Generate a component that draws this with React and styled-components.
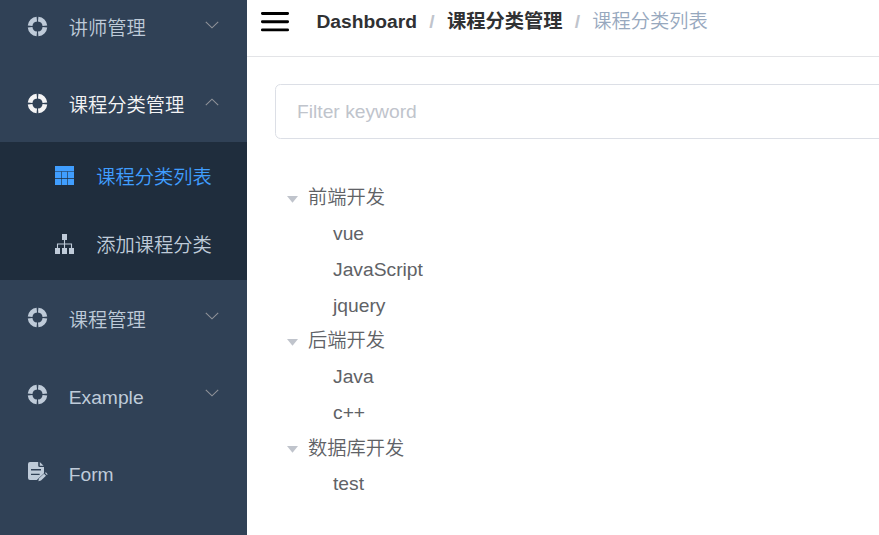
import React from "react";
import styled, { createGlobalStyle } from "styled-components";

const GlobalStyle = createGlobalStyle`
  * { box-sizing: border-box; }
  html, body { margin: 0; height: 535px; overflow: hidden; background: #fff; }
  body {
    font-family: "Liberation Sans", "Noto Sans CJK SC", sans-serif;
    font-size: 19.25px;
    font-weight: 350;
    color: #606266;
  }
`;

const Layout = styled.div`
  display: flex;
  width: 879px;
  height: 535px;
  overflow: hidden;
`;

const Sidebar = styled.nav`
  flex: 0 0 247px;
  height: 535px;
  overflow: hidden;
  background: #304156;
`;

const MenuList = styled.div`
  margin-top: -12px;
`;

const MenuItem = styled.div`
  display: flex;
  align-items: center;
  height: 77px;
  padding: 0 28px 0 27px;
  color: ${(p) => (p.$active ? "#f4f4f5" : "#bfcbd9")};
`;

const SubMenu = styled.div`
  height: 138px;
  margin-bottom: -1px;
  background: #1f2d3d;
`;

const SubItem = styled.div`
  display: flex;
  align-items: center;
  height: 69px;
  padding-left: 54px;
  color: ${(p) => (p.$active ? "#409eff" : "#bfcbd9")};
`;

const MenuIcon = styled.svg`
  flex: none;
  width: 21px;
  height: 21px;
  margin-right: ${(p) => (p.$nested ? 21.2 : 20.7)}px;
  fill: currentColor;
  overflow: visible;
`;

const Label = styled.span`
  flex: 1;
  line-height: 28px;
  padding-top: ${(p) => p.$drop ?? 5}px;
  white-space: nowrap;
`;

const Arrow = styled.svg`
  width: 14px;
  height: 8px;
  margin-bottom: 4px;
  fill: none;
  stroke: #909399;
  stroke-width: 1.1;
  transform: ${(p) => (p.$up ? "scaleY(-1)" : "none")};
`;

const Main = styled.main`
  flex: 1;
  min-width: 0;
  overflow: hidden;
`;

const Navbar = styled.header`
  display: flex;
  align-items: center;
  height: 57px;
  padding: 0 0 13px 14px;
  border-bottom: 1px solid #e3e4e7;
`;

const Hamburger = styled.svg`
  flex: none;
  width: 28px;
  height: 20px;
  margin-right: 27.4px;
  stroke: #000;
  stroke-width: 2.9;
  stroke-linecap: round;
  overflow: visible;
`;

const Breadcrumb = styled.div`
  display: flex;
  align-items: center;
  line-height: 28px;
  white-space: nowrap;
`;

const Crumb = styled.span`
  font-weight: ${(p) => (p.$current ? 350 : 700)};
  color: ${(p) => (p.$current ? "#97a8be" : "#303133")};
`;

const Separator = styled.span`
  margin: 0 12.3px;
  font-weight: 700;
  color: #c0c4cc;
`;

const Content = styled.section`
  padding: 27px 0 0 28px;
`;

const FilterInput = styled.input`
  display: block;
  width: 700px;
  height: 55px;
  padding: 0 21px;
  border: 1px solid #dcdfe6;
  border-radius: 5.5px;
  background: #fff;
  color: #606266;
  font: inherit;
  outline: none;
  &::placeholder { color: #c0c4cc; opacity: 1; }
`;

const Tree = styled.div`
  padding-top: 41px;
`;

const Node = styled.div`
  display: flex;
  align-items: center;
  height: 35.75px;
  line-height: 35.75px;
  padding-left: ${(p) => (p.$leaf ? 58 : 12)}px;
`;

const NodeText = styled.span`
  padding-top: ${(p) => (p.$leaf ? 0.5 : 0.6)}px;
  white-space: nowrap;
`;

const Caret = styled.svg`
  width: 11px;
  height: 7px;
  margin: 3px 10px 0 0;
  fill: #c0c4cc;
`;

const RingIcon = () => (
  <MenuIcon viewBox="0 0 21 21">
    <g fill="none" stroke="currentColor" strokeWidth="4.7">
      <path d="M11.2 3.1A7.4 7.4 0 0 1 17.9 9.8" />
      <path d="M17.9 11.2A7.4 7.4 0 0 1 11.2 17.9" />
      <path d="M9.8 17.9A7.4 7.4 0 0 1 3.1 11.2" />
      <path d="M3.1 9.8A7.4 7.4 0 0 1 9.8 3.1" />
    </g>
  </MenuIcon>
);

const TableIcon = () => (
  <MenuIcon $nested viewBox="0 0 21 21">
    <path d="M1 0h19v5.2H1zM1 5.8h6.2v6.2H1zM7.8 5.8h5.4v6.2H7.8zM13.8 5.8H20v6.2h-6.2zM1 12.7h6.2V19H1zM7.8 12.7h5.4V19H7.8zM13.8 12.7H20V19h-6.2z" />
  </MenuIcon>
);

const OrgIcon = () => (
  <MenuIcon $nested viewBox="0 0 21 21">
    <path d="M8 -1h5v6H8zM1 13h5v6H1zM8 13h5v6H8zM15 13h5v6h-5z" />
    <path d="M10.5 5v8M3.5 13V9h14v4" fill="none" stroke="currentColor" strokeWidth="1.1" />
  </MenuIcon>
);

const FormIcon = () => (
  <MenuIcon viewBox="0 0 21 21">
    <path
      fillRule="evenodd"
      d="M3 1h8.2v3.4q0 1.6 1.6 1.6H17v6.2L9.8 19H3q-2 0-2-2V3q0-2 2-2zM4 8.1v1.3h10V8.1zM4 12.7V14h8.6v-1.3z"
    />
    <path d="M12.8 1l3.8 3.8h-3.8zM11.4 20.2l.5-2.6 5.1-4.8 2 2-5 4.8zM18 12.1l.9-.8 1.8 1.9-.8.9z" />
  </MenuIcon>
);

const Chevron = ({ up }) => (
  <Arrow $up={up} viewBox="0 0 14 8">
    <path d="M.8 .8L7 6.8L13.2 .8" />
  </Arrow>
);

const tree = [
  { name: "前端开发", children: ["vue", "JavaScript", "jquery"] },
  { name: "后端开发", children: ["Java", "c++"] },
  { name: "数据库开发", children: ["test"] },
];

export default function App() {
  return (
    <>
      <GlobalStyle />
      <Layout>
        <Sidebar>
          <MenuList>
            <MenuItem><RingIcon /><Label>讲师管理</Label><Chevron /></MenuItem>
            <MenuItem $active><RingIcon /><Label>课程分类管理</Label><Chevron up /></MenuItem>
            <SubMenu>
              <SubItem $active><TableIcon /><Label $drop={2}>课程分类列表</Label></SubItem>
              <SubItem><OrgIcon /><Label $drop={1}>添加课程分类</Label></SubItem>
            </SubMenu>
            <MenuItem><RingIcon /><Label $drop={7}>课程管理</Label><Chevron /></MenuItem>
            <MenuItem><RingIcon /><Label $drop={7}>Example</Label><Chevron /></MenuItem>
            <MenuItem><FormIcon /><Label $drop={7}>Form</Label></MenuItem>
          </MenuList>
        </Sidebar>
        <Main>
          <Navbar>
            <Hamburger viewBox="0 0 28 20">
              <path d="M1.4 1.5H26.6M1.4 9.7H26.6M1.4 17.9H26.6" />
            </Hamburger>
            <Breadcrumb>
              <Crumb>Dashboard</Crumb>
              <Separator>/</Separator>
              <Crumb>课程分类管理</Crumb>
              <Separator>/</Separator>
              <Crumb $current>课程分类列表</Crumb>
            </Breadcrumb>
          </Navbar>
          <Content>
            <FilterInput placeholder="Filter keyword" />
            <Tree>
              {tree.map((group) => (
                <React.Fragment key={group.name}>
                  <Node>
                    <Caret viewBox="0 0 11 7"><path d="M0 0h11L5.5 6.8z" /></Caret>
                    <NodeText>{group.name}</NodeText>
                  </Node>
                  {group.children.map((c) => (
                    <Node $leaf key={c}><NodeText $leaf>{c}</NodeText></Node>
                  ))}
                </React.Fragment>
              ))}
            </Tree>
          </Content>
        </Main>
      </Layout>
    </>
  );
}
